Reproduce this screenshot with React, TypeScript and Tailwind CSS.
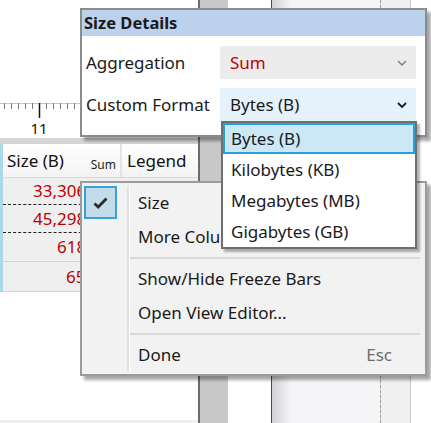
import React from "react";

const font = { fontFamily: '"Noto Sans", "Open Sans", sans-serif' };

function Chevron({ dark }: { dark?: boolean }) {
    return (
        <svg width="10" height="6" viewBox="0 0 10 6" className="shrink-0">
            <path
                d="M1 1 L5 5 L9 1"
                fill="none"
                stroke={dark ? "#1a1a1a" : "#7a7a7a"}
                strokeWidth={dark ? 1.8 : 1.3}
            />
        </svg>
    );
}

function Ruler() {
    const ticks = [4, 11, 18, 25, 32, 46, 53, 60, 67, 74];
    return (
        <div className="flex flex-col">
            <svg width="198" height="20" viewBox="0 0 198 20" className="block">
                <line x1="0" y1="5.5" x2="198" y2="5.5" stroke="#c8c8c8" strokeWidth="1" />
                {ticks.map((x) => (
                    <line key={x} x1={x + 0.5} y1="5" x2={x + 0.5} y2="11" stroke="#7a7a7a" strokeWidth="1" />
                ))}
                <line x1="39.5" y1="5" x2="39.5" y2="20" stroke="#111" strokeWidth="1.5" />
            </svg>
            <div className="w-[78px] text-center text-[15px] leading-[20px] text-[#111]">11</div>
        </div>
    );
}

function LeftPanel() {
    const rows = [
        { v: "33,306,112", pl: "pl-[30px]", h: "h-[27px]", b: "border-b border-dashed border-[#222]" },
        { v: "45,298,560", pl: "pl-[30px]", h: "h-[28px]", b: "border-b border-dashed border-[#222]" },
        { v: "618,496", pl: "pl-[54px]", h: "h-[29px]", b: "border-b border-[#d2d2d2]" },
        { v: "65,024", pl: "pl-[63px]", h: "h-[30px]", b: "border-b border-[#d2d2d2]" },
    ];
    return (
        <div className="w-[198px] h-full flex flex-col bg-white">
            <div className="h-[98px]" />
            <Ruler />
            <div className="h-[6px] bg-[#d6d6d6]" />
            <div className="flex">
                <div className="w-[3px] bg-[#a9d9eb]" />
                <div className="flex-1 flex flex-col">
                    <div className="h-[34px] flex bg-gradient-to-b from-white to-[#f3f3f3] border-b border-[#dadada]">
                        <div className="w-[119px] flex items-center justify-between pl-[4px] pr-[4px] border-r-2 border-[#e4e4e4]">
                            <span className="text-[17px] text-[#111]">Size (B)</span>
                            <span className="text-[12px] self-end mb-[3px] text-[#222]">Sum</span>
                        </div>
                        <div className="flex-1 flex items-center pl-[5px] text-[17px] text-[#111]">Legend</div>
                    </div>
                    {rows.map((r) => (
                        <div key={r.v} className={`${r.h} ${r.b} ${r.pl} bg-[#efefef] flex items-center text-[17px] text-[#c00000] whitespace-nowrap overflow-hidden`}>
                            {r.v}
                        </div>
                    ))}
                </div>
            </div>
            <div className="flex-1" />
            <div className="h-[3px] bg-[#efefef]" />
        </div>
    );
}

function SizeDetails() {
    return (
        <div className="absolute left-[80px] top-[8px] w-[347px] border-2 border-[#8c8c8c] bg-white shadow-[4px_4px_3px_rgba(0,0,0,0.35)]">
            <div className="h-[26px] bg-[#bcd1eb] pl-[2px] flex items-center text-[16.5px] font-bold text-[#1a1a1a]">
                Size Details
            </div>
            <div className="flex flex-col pt-[10px] gap-[9px] pb-[14px]">
                <div className="flex items-center">
                    <div className="w-[138px] pl-[4px] text-[17px] text-[#1a1a1a]">Aggregation</div>
                    <div className="w-[196px] h-[33px] bg-[#ececec] flex items-center justify-between pl-[10px] pr-[9px]">
                        <span className="text-[17px] text-[#c00000]">Sum</span>
                        <Chevron />
                    </div>
                </div>
                <div className="flex items-center">
                    <div className="w-[138px] pl-[4px] text-[17px] text-[#1a1a1a]">Custom Format</div>
                    <div className="w-[196px] h-[33px] bg-[#e5f1fb] flex items-center justify-between pl-[10px] pr-[9px]">
                        <span className="text-[17px] text-[#1a1a1a]">Bytes (B)</span>
                        <Chevron dark />
                    </div>
                </div>
            </div>
        </div>
    );
}

function FormatList() {
    const items = ["Bytes (B)", "Kilobytes (KB)", "Megabytes (MB)", "Gigabytes (GB)"];
    return (
        <div className="absolute left-[221px] top-[121px] w-[196px] border-2 border-[#6f6f6f] bg-white shadow-[3px_3px_2px_rgba(0,0,0,0.3)]">
            {items.map((it, i) => (
                <div
                    key={it}
                    className={
                        i === 0
                            ? "h-[31px] flex items-center pl-[6px] border-2 border-[#2a9fd8] bg-[#cce8f6] text-[17px] text-[#1a1a1a]"
                            : "h-[31px] flex items-center pl-[8px] text-[17px] text-[#1a1a1a]"
                    }
                >
                    {it}
                </div>
            ))}
        </div>
    );
}

function ContextMenu() {
    return (
        <div className="absolute left-[80px] top-[181px] w-[347px] border-2 border-[#9b9b9b] bg-[#f2f2f2] shadow-[4px_4px_3px_rgba(0,0,0,0.35)] flex">
            <div className="w-[45px] pt-[3px] pl-[2px]">
                <div className="w-[33px] h-[33px] border-2 border-[#3aa0da] bg-[#c3dcea] flex items-center justify-center">
                    <svg width="15" height="12" viewBox="0 0 15 12">
                        <path d="M1.5 6.5 L5.2 10 L13.5 1.5" fill="none" stroke="#2b2b2b" strokeWidth="2.8" strokeLinejoin="miter" />
                    </svg>
                </div>
            </div>
            <div className="flex my-[3px]">
                <div className="w-[2px] bg-[#e1e1e1]" />
                <div className="w-[1px] bg-white" />
            </div>
            <div className="flex-1 flex flex-col pt-[3px] pb-[2px] text-[17px] text-[#1a1a1a]">
                <div className="h-[34px] flex items-center pl-[8px]">Size</div>
                <div className="h-[34px] flex items-center pl-[8px]">More Columns</div>
                <div className="h-[8px] flex items-center mr-[5px]">
                    <div className="h-[2px] w-full bg-[#d9d9d9]" />
                </div>
                <div className="h-[34px] flex items-center pl-[8px]">Show/Hide Freeze Bars</div>
                <div className="h-[34px] flex items-center pl-[8px]">Open View Editor...</div>
                <div className="h-[8px] flex items-center mr-[5px]">
                    <div className="h-[2px] w-full bg-[#d9d9d9]" />
                </div>
                <div className="h-[34px] flex items-center justify-between pl-[8px] pr-[33px]">
                    <span>Done</span>
                    <span className="text-[#6d6d6d]">Esc</span>
                </div>
            </div>
        </div>
    );
}

export default function App() {
    return (
        <div className="relative w-[431px] h-[423px] overflow-hidden flex bg-white" style={font}>
            <LeftPanel />
            <div className="w-[2px] bg-[#6b6b6b]" />
            <div className="w-[28px] bg-[#c8c8c8]" />
            <div className="w-[43px] bg-white" />
            <div className="w-[1px] bg-[#4a4a4a]" />
            <div className="w-[109px] bg-gradient-to-r from-[#d2d2d4] via-[#f5f5f7] via-[18%] to-[#f5f5f7] border-r border-dashed border-[#a0a0a0]" />
            <div className="w-[30px] bg-[#f0f0f0] border-r border-[#c8c8c8]" />
            <div className="flex-1 bg-white" />
            <SizeDetails />
            <ContextMenu />
            <FormatList />
        </div>
    );
}
